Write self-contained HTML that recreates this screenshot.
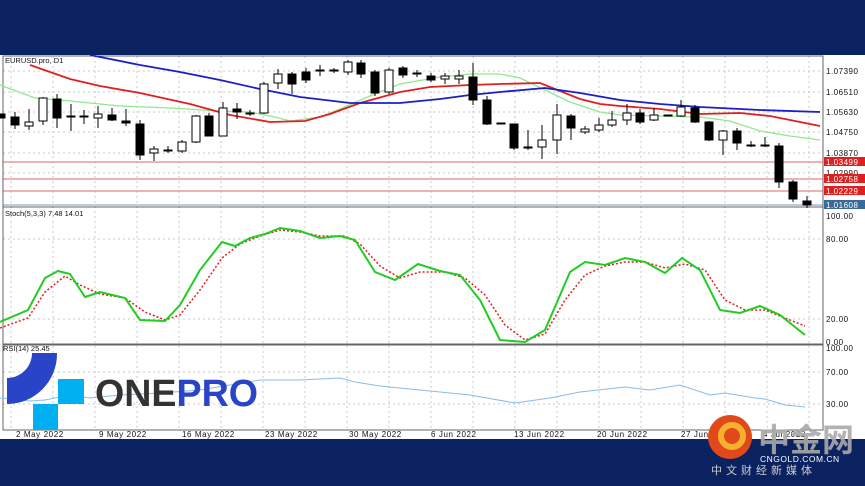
<!DOCTYPE html>
<html><head><meta charset="utf-8"><style>
html,body{margin:0;padding:0;width:865px;height:486px;overflow:hidden;background:#0b2260;}
svg{display:block}
</style></head><body>
<svg width="865" height="486" viewBox="0 0 865 486" xmlns="http://www.w3.org/2000/svg" font-family="Liberation Sans, sans-serif">
<rect x="0" y="0" width="865" height="486" fill="#0b2260"/>
<rect x="0" y="55" width="865" height="384" fill="#fff"/>
<g stroke="#c8c8c8" stroke-dasharray="2,3" stroke-width="1">
<line x1="11" y1="56" x2="11" y2="430"/><line x1="53" y1="56" x2="53" y2="430"/><line x1="95" y1="56" x2="95" y2="430"/><line x1="137" y1="56" x2="137" y2="430"/><line x1="179" y1="56" x2="179" y2="430"/><line x1="221" y1="56" x2="221" y2="430"/><line x1="263" y1="56" x2="263" y2="430"/><line x1="305" y1="56" x2="305" y2="430"/><line x1="347" y1="56" x2="347" y2="430"/><line x1="389" y1="56" x2="389" y2="430"/><line x1="431" y1="56" x2="431" y2="430"/><line x1="473" y1="56" x2="473" y2="430"/><line x1="515" y1="56" x2="515" y2="430"/><line x1="557" y1="56" x2="557" y2="430"/><line x1="599" y1="56" x2="599" y2="430"/><line x1="641" y1="56" x2="641" y2="430"/><line x1="683" y1="56" x2="683" y2="430"/><line x1="725" y1="56" x2="725" y2="430"/><line x1="767" y1="56" x2="767" y2="430"/><line x1="809" y1="56" x2="809" y2="430"/>
<line x1="3" y1="71" x2="823" y2="71"/><line x1="3" y1="92" x2="823" y2="92"/><line x1="3" y1="112" x2="823" y2="112"/><line x1="3" y1="132" x2="823" y2="132"/><line x1="3" y1="153" x2="823" y2="153"/><line x1="3" y1="173" x2="823" y2="173"/>
<line x1="3" y1="239" x2="823" y2="239"/><line x1="3" y1="319" x2="823" y2="319"/>
<line x1="3" y1="372" x2="823" y2="372"/><line x1="3" y1="404" x2="823" y2="404"/>
</g>
<g stroke="#e89a9a" stroke-width="1.5"><line x1="3" y1="162" x2="823" y2="162"/><line x1="3" y1="179" x2="823" y2="179"/><line x1="3" y1="191" x2="823" y2="191"/></g>
<line x1="3" y1="205" x2="823" y2="205" stroke="#8fb0d0" stroke-width="1.2"/>
<g fill="none" stroke="#666" stroke-width="1"><rect x="3" y="56" width="820" height="151"/><rect x="3" y="207" width="820" height="137"/><rect x="3" y="345" width="820" height="85"/></g>
<polyline fill="none" stroke="#90e890" stroke-width="1.3" points="0,85 35,98 70,101 120,106 170,108 220,111 250,112 275,117 290,121 320,117 340,109 370,96 400,84 440,77 470,74 500,74 520,78 545,90 570,102 600,112 620,115 660,116 700,117 730,121 760,131 790,136 820,140"/>
<polyline fill="none" stroke="#e02020" stroke-width="1.8" points="30,65 70,79 100,86 140,93 190,104 230,115 270,122 305,121 330,114 360,103 400,92 430,87 470,85 500,84 540,83 560,91 580,99 600,104 620,106 660,109 700,114 740,113 770,116 800,122 820,126"/>
<polyline fill="none" stroke="#1a20c8" stroke-width="1.8" points="90,55 140,65 180,72 220,80 260,89 300,97 350,103 400,103 440,99 470,95 500,92 545,88 580,93 620,100 660,104 700,107 760,110 820,112"/>
<g stroke="#000" stroke-width="1">
<path d="M15 112V129M29 109V130M43 97V125M57 94V128M71 104V131M84 110V124M98 106V128M112 108V121M126 109V126M140 120V160M154 146V161M168 146V153M182 140V153M196 115V143M209 113V136M223 102V136M237 103V119M250 110V116M264 82V114M278 69V89M292 72V94M306 68V83M320 65V76M334 68V73M348 60V75M361 60V78M375 70V96M389 68V94M403 66V78M417 70V77M431 73V82M445 73V84M459 70V84M473 63V105M487 96V125M501 123V124M514 124V150M528 130V150M542 125V159M557 104V154M571 114V140M585 126V134M599 118V132M612 111V127M627 104V125M640 109V124M654 108V121M681 100V117M695 105V123M709 121V141M723 130V155M737 128V150M751 141V147M765 137V147M779 143V188M793 180V202M807 196V208"/>
</g>
<g stroke="#000" stroke-width="1">
<rect x="0" y="114" width="5" height="4" fill="#000"/>
<rect x="11" y="117" width="8" height="8" fill="#000"/>
<rect x="25" y="122" width="8" height="4" fill="#fff"/>
<rect x="39" y="98" width="8" height="23" fill="#fff"/>
<rect x="53" y="99" width="8" height="19" fill="#000"/>
<rect x="67" y="116" width="8" height="1" fill="#000"/>
<rect x="80" y="116" width="8" height="1" fill="#000"/>
<rect x="94" y="114" width="8" height="4" fill="#fff"/>
<rect x="108" y="115" width="8" height="5" fill="#000"/>
<rect x="122" y="121" width="8" height="2" fill="#000"/>
<rect x="136" y="124" width="8" height="31" fill="#000"/>
<rect x="150" y="149" width="8" height="4" fill="#fff"/>
<rect x="164" y="150" width="8" height="1" fill="#000"/>
<rect x="178" y="142" width="8" height="9" fill="#fff"/>
<rect x="192" y="116" width="8" height="26" fill="#fff"/>
<rect x="205" y="116" width="8" height="20" fill="#000"/>
<rect x="219" y="108" width="8" height="28" fill="#fff"/>
<rect x="233" y="109" width="8" height="3" fill="#000"/>
<rect x="246" y="113" width="8" height="1" fill="#000"/>
<rect x="260" y="84" width="8" height="29" fill="#fff"/>
<rect x="274" y="74" width="8" height="9" fill="#fff"/>
<rect x="288" y="74" width="8" height="10" fill="#000"/>
<rect x="302" y="72" width="8" height="8" fill="#000"/>
<rect x="316" y="70" width="8" height="1" fill="#000"/>
<rect x="330" y="70" width="8" height="1" fill="#000"/>
<rect x="344" y="62" width="8" height="10" fill="#fff"/>
<rect x="357" y="63" width="8" height="11" fill="#000"/>
<rect x="371" y="72" width="8" height="21" fill="#000"/>
<rect x="385" y="70" width="8" height="22" fill="#fff"/>
<rect x="399" y="68" width="8" height="7" fill="#000"/>
<rect x="413" y="73" width="8" height="1" fill="#000"/>
<rect x="427" y="76" width="8" height="4" fill="#000"/>
<rect x="441" y="76" width="8" height="3" fill="#fff"/>
<rect x="455" y="76" width="8" height="3" fill="#fff"/>
<rect x="469" y="77" width="8" height="23" fill="#000"/>
<rect x="483" y="100" width="8" height="24" fill="#000"/>
<rect x="497" y="123" width="8" height="1" fill="#000"/>
<rect x="510" y="124" width="8" height="24" fill="#000"/>
<rect x="524" y="147" width="8" height="1" fill="#000"/>
<rect x="538" y="140" width="8" height="7" fill="#fff"/>
<rect x="553" y="115" width="8" height="25" fill="#fff"/>
<rect x="567" y="116" width="8" height="12" fill="#000"/>
<rect x="581" y="129" width="8" height="3" fill="#fff"/>
<rect x="595" y="125" width="8" height="5" fill="#fff"/>
<rect x="608" y="120" width="8" height="5" fill="#fff"/>
<rect x="623" y="113" width="8" height="7" fill="#fff"/>
<rect x="636" y="113" width="8" height="9" fill="#000"/>
<rect x="650" y="115" width="8" height="5" fill="#fff"/>
<rect x="664" y="115" width="8" height="1" fill="#000"/>
<rect x="677" y="107" width="8" height="9" fill="#fff"/>
<rect x="691" y="108" width="8" height="14" fill="#000"/>
<rect x="705" y="122" width="8" height="18" fill="#000"/>
<rect x="719" y="131" width="8" height="9" fill="#fff"/>
<rect x="733" y="131" width="8" height="12" fill="#000"/>
<rect x="747" y="145" width="8" height="1" fill="#000"/>
<rect x="761" y="145" width="8" height="1" fill="#000"/>
<rect x="775" y="146" width="8" height="36" fill="#000"/>
<rect x="789" y="182" width="8" height="17" fill="#000"/>
<rect x="803" y="201" width="8" height="4" fill="#000"/>
</g>
<polyline fill="none" stroke="#e02020" stroke-width="1.5" stroke-dasharray="2,2" points="0,328 28,318 45,292 65,276 80,285 100,294 125,298 145,312 165,320 180,315 200,290 222,258 240,244 260,236 280,230 300,232 320,236 345,236 360,244 380,266 400,278 420,272 445,272 465,278 485,295 505,325 525,340 545,334 565,300 585,275 605,266 625,262 645,262 665,268 685,264 705,270 725,300 745,310 765,310 785,318 805,326"/>
<polyline fill="none" stroke="#22cc22" stroke-width="2" points="0,322 28,310 45,278 58,271 70,274 85,297 100,292 125,298 140,320 165,321 180,305 200,270 222,242 235,246 250,238 265,234 280,228 300,231 320,238 340,236 355,240 375,272 395,280 418,264 440,271 460,275 480,300 500,340 525,342 545,330 570,272 585,262 605,265 625,258 645,262 665,273 682,258 700,270 720,310 740,313 760,306 780,315 805,335"/>
<polyline fill="none" stroke="#88bbee" stroke-width="1" points="0,398 30,401 45,400 70,395 90,398 120,395 160,393 200,390 230,385 260,380 300,380 340,378 355,382 380,386 420,390 470,395 515,403 550,398 580,392 625,387 650,390 680,385 710,395 725,393 755,398 765,399 785,405 805,407"/>
<g font-size="7.5" fill="#111">
<text x="5" y="63">EURUSD.pro, D1</text>
<text x="5" y="216">Stoch(5,3,3) 7.48 14.01</text>
<text x="3" y="351">RSI(14) 25.45</text>
</g>
<g font-size="8" fill="#111" letter-spacing="0.5">
<text x="826" y="74">1.07390</text><text x="826" y="95">1.06510</text><text x="826" y="115">1.05630</text><text x="826" y="135">1.04750</text><text x="826" y="156">1.03870</text><text x="826" y="176">1.02990</text>
<text x="826" y="219">100.00</text><text x="826" y="242">80.00</text><text x="826" y="322">20.00</text><text x="826" y="345">0.00</text><text x="826" y="351">100.00</text><text x="826" y="375">70.00</text><text x="826" y="407">30.00</text>
</g>
<rect x="824" y="157" width="41" height="9" fill="#e02020"/><rect x="824" y="174" width="41" height="9" fill="#e02020"/><rect x="824" y="186" width="41" height="9" fill="#e02020"/><rect x="824" y="200" width="41" height="9" fill="#3a6a9a"/>
<g font-size="8" fill="#fff" letter-spacing="0.5"><text x="826" y="165">1.03499</text><text x="826" y="182">1.02758</text><text x="826" y="194">1.02229</text><text x="826" y="208">1.01608</text></g>
<g font-size="8" fill="#111" letter-spacing="0.6">
<text x="16" y="437">2 May 2022</text><text x="99" y="437">9 May 2022</text><text x="182" y="437">16 May 2022</text><text x="265" y="437">23 May 2022</text><text x="349" y="437">30 May 2022</text><text x="431" y="437">6 Jun 2022</text><text x="514" y="437">13 Jun 2022</text><text x="597" y="437">20 Jun 2022</text><text x="681" y="437">27 Jun</text><text x="763" y="437">4 Jul 2022</text>
</g>
<path d="M57 353 H32 A25 25 0 0 1 7 378 V404 A50 50 0 0 0 57 354 Z" fill="#2a44c8"/>
<rect x="58" y="379" width="26" height="25" fill="#00b0f0"/>
<rect x="33" y="404" width="25" height="26" fill="#00b0f0"/>
<text x="95" y="406" font-size="38" font-weight="bold" fill="#333" textLength="163" lengthAdjust="spacingAndGlyphs">ONE<tspan fill="#2a44c8">PRO</tspan></text>
<circle cx="730" cy="437" r="22" fill="#e04a1a"/>
<circle cx="732" cy="436" r="11" fill="none" stroke="#f6b030" stroke-width="6"/>
<text x="758" y="451" font-size="32" font-weight="bold" fill="#aaa" font-family="Noto Sans CJK SC, sans-serif" opacity="0.9">中金网</text>
<text x="760" y="462" font-size="8.5" fill="#fff" letter-spacing="0.5">CNGOLD.COM.CN</text>
<text x="711" y="474" font-size="11" fill="#ccc" letter-spacing="4" font-family="Noto Sans CJK SC, sans-serif">中文财经新媒体</text>
</svg>
</body></html>
